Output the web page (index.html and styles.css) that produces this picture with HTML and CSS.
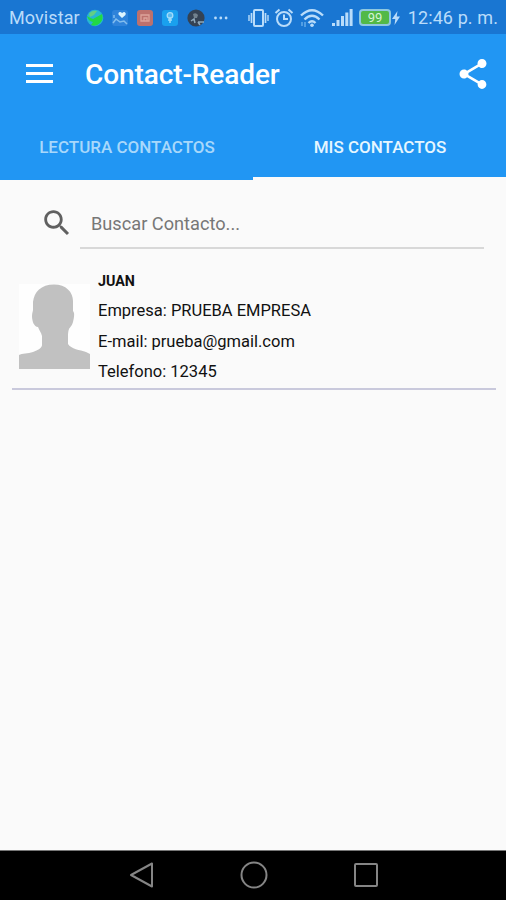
FILE: index.html
```html
<!DOCTYPE html>
<html lang="es">

<head>
    <meta charset="UTF-8">
    <meta name="viewport" content="width=device-width, initial-scale=1.0">
    <title>Contact-Reader</title>
    <link rel="stylesheet" href="styles.css">
</head>

<body>
    <div class="status-bar">
        <span class="carrier">Movistar</span>
        <div class="notifications">
            <svg width="18" height="18" viewBox="0 0 18 18">
                <circle cx="9" cy="9" r="8.3" fill="#27b6d2" />
                <path d="M1 7Q4 9 7 10L16 5Q18 10 14 14Q10 18 5 16L7 13Q2 12 1 7Z" fill="#22d944" />
                <path d="M3 5Q6 1 11 2L8 6L4 8Z" fill="#62cf83" />
            </svg>
            <svg width="18" height="18" viewBox="0 0 18 18">
                <rect x="1" y="1" width="16" height="16" rx="3" fill="#2f83da" />
                <path d="M11 9L7.5 5.5Q7 3 9 3Q10.500 3 11 4.300Q12 3 13.500 3Q15.500 4 14.500 6Z" fill="#def5ff" />
                <path d="M2 14L5 10L9 13L13 12L16 15M3 6V9" fill="none" stroke="#82bded" stroke-width="1.500" />
            </svg>
            <svg width="18" height="18" viewBox="0 0 18 18">
                <rect x="1" y="1" width="16" height="16" rx="3" fill="#bd716d" />
                <path d="M5 6H13V12H5ZM8 12V9H11V12" fill="none" stroke="#dda29a" stroke-width="1.300" />
            </svg>
            <svg width="18" height="18" viewBox="0 0 18 18">
                <rect x="1" y="1" width="16" height="16" rx="3" fill="#1aa0ee" />
                <circle cx="9" cy="6.500" r="2.800" fill="#58baf0" stroke="#a3dcfa" stroke-width="1.300" />
                <path d="M9 8V14M7 11H11" stroke="#a3dcfa" stroke-width="1.500" />
            </svg>
            <svg width="20" height="18" viewBox="0 0 20 18">
                <circle cx="10" cy="9" r="8.600" fill="#344253" />
                <path d="M7 5Q10 3 12 6L11 9L8 9Z" fill="#71818d" />
                <path d="M5 12L8 10L9 14M12 13H18M12 13L14 16" fill="none" stroke="#8fa9bb" stroke-width="1.500" />
            </svg>
            <svg class="more" width="16" height="18" viewBox="0 0 16 18">
                <circle cx="2.500" cy="9" r="1.400" />
                <circle cx="7.800" cy="9" r="1.400" />
                <circle cx="13.100" cy="9" r="1.400" />
            </svg>
        </div>
        <div class="system">
            <svg width="21" height="20" viewBox="0 0 21 20" fill="none" stroke="#b9dcfa">
                <rect x="6" y="2" width="9" height="16" rx="1" stroke-width="2" />
                <path d="M3.500 5V15M17.500 5V15" stroke-width="1.700" />
                <path d="M1 7V13M20 7V13" stroke-width="1.400" />
            </svg>
            <svg class="alarm" width="20" height="20" viewBox="0 0 20 20" fill="none" stroke="#b9dcfa" stroke-width="2">
                <circle cx="10" cy="11" r="7" />
                <path d="M10 6.500V11H14M1.500 5L5.500 1.500M18.500 5L14.500 1.500" />
            </svg>
            <svg class="wifi" width="24" height="20" viewBox="0 0 24 20" fill="none" stroke="#b9dcfa" stroke-width="2.400">
                <path d="M1 7.500Q12 -3 23 7.500M4.500 11.500Q12 4 19.500 11.500M8.500 15Q12 11.500 15.500 15" />
                <circle cx="12" cy="17.300" r="1.800" fill="#b9dcfa" stroke="none" />
                <path d="M2 14V18M5 14V19" stroke="#66ace9" stroke-width="1.500" />
            </svg>
            <svg class="signal" width="22" height="20" viewBox="0 0 22 20" fill="#b9dcfa">
                <rect x="1" y="15" width="3" height="3" />
                <rect x="5.500" y="12" width="3" height="6" />
                <rect x="10" y="8" width="3" height="10" />
                <rect x="14.300" y="4.500" width="3" height="13.500" />
                <rect x="18.600" y="1" width="3" height="17" />
            </svg>
            <div class="battery">99</div>
            <svg width="8" height="16" viewBox="0 0 8 16" fill="#b9dcfa">
                <path d="M5.500 1L0 9H3.300L2.500 15L8 6.500H4.700Z" />
            </svg>
        </div>
        <span class="time">12:46 p. m.</span>
    </div>

    <div class="toolbar">
        <svg class="menu" width="27" height="20" viewBox="0 0 27 20" fill="#fff">
            <rect width="27" height="3" />
            <rect y="8" width="27" height="3" />
            <rect y="16" width="27" height="3" />
        </svg>
        <h1>Contact-Reader</h1>
        <svg class="share" width="36" height="36" viewBox="0 0 24 24" fill="#fff">
            <path d="M18 16.080c-.760 0-1.440.300-1.960.770L8.910 12.700c.050-.230.090-.460.090-.700s-.040-.470-.090-.700l7.050-4.110c.540.500 1.250.810 2.040.810 1.660 0 3-1.340 3-3s-1.340-3-3-3-3 1.340-3 3c0 .240.040.470.090.700L8.040 9.810C7.500 9.310 6.790 9 6 9c-1.660 0-3 1.340-3 3s1.340 3 3 3c.790 0 1.500-.310 2.040-.810l7.120 4.160c-.050.210-.080.430-.080.650 0 1.610 1.310 2.920 2.920 2.920s2.920-1.310 2.920-2.920-1.310-2.920-2.920-2.920z" />
        </svg>
    </div>

    <div class="tabs">
        <div class="tab">LECTURA CONTACTOS</div>
        <div class="tab active">MIS CONTACTOS</div>
    </div>

    <div class="content">
        <div class="search">
            <svg width="34" height="34" viewBox="0 0 24 24" fill="#606060">
                <path d="M15.500 14h-.790l-.280-.270C15.410 12.590 16 11.110 16 9.500 16 5.910 13.090 3 9.500 3S3 5.910 3 9.500 5.910 16 9.500 16c1.610 0 3.090-.590 4.230-1.570l.270.280v.790l5 4.990L20.490 19l-4.990-5zm-6 0C7.010 14 5 11.990 5 9.500S7.010 5 9.500 5 14 7.010 14 9.500 11.990 14 9.500 14z" />
            </svg>
            <div class="search-field">Buscar Contacto...</div>
        </div>

        <div class="contact">
            <svg class="avatar" width="71" height="85" viewBox="0 0 71 85">
                <rect width="71" height="85" fill="#fefefe" />
                <path d="M35 0.500C47 0.500 54 8 54 17V27C56 29 55 34 54 38C53 42 51 43 50 45C49 48 49 50 49 52V60C52 65 61 66 67 68L71 70V85H0V71C3 69 9 70 14 68C19 66 23 64 23 61V52C22 48 20 46 19 43C15 43 13 37 13 32C13 29 14 27 14 26V18C15 8 22 0.500 35 0.500Z" fill="#c1c1c1" />
            </svg>
            <div class="details">
                <p class="name">JUAN</p>
                <p class="company">Empresa: PRUEBA EMPRESA</p>
                <p class="email">E-mail: prueba@gmail.com</p>
                <p class="phone">Telefono: 12345</p>
            </div>
        </div>
    </div>

    <div class="nav-bar">
        <svg width="28" height="28" viewBox="0 0 28 28">
            <path d="M24 2.500V25.500L3 14Z" />
        </svg>
        <svg width="28" height="28" viewBox="0 0 28 28">
            <circle cx="14" cy="14" r="12.500" />
        </svg>
        <svg width="28" height="28" viewBox="0 0 28 28">
            <rect x="3" y="3" width="22" height="22" rx="1" />
        </svg>
    </div>
</body>

</html>
```

FILE: styles.css
```css
* {
    margin: 0;
    padding: 0;
    box-sizing: border-box;
}

body {
    display: flex;
    flex-direction: column;
    height: 900px;
    background-color: #fafafa;
    font-family: Roboto, sans-serif;
    color: #111;
    overflow: hidden;
}

svg {
    display: block;
    flex-shrink: 0;
}

.status-bar {
    display: flex;
    align-items: center;
    height: 34px;
    padding: 1px 8px 0 9px;
    background-color: #1976d2;
    color: #b9dcfa;
    font-size: 18px;
    white-space: nowrap;
}

.carrier {
    width: 77px;
    letter-spacing: 0.1px;
}

.notifications {
    display: flex;
    gap: 7px;
}

.more {
    fill: #b9dcfa;
}

.system {
    display: flex;
    align-items: center;
    margin-left: 19px;
}

.alarm {
    margin-left: 5px;
}

.wifi {
    margin-left: 6px;
}

.signal {
    margin-left: 7px;
}

.battery {
    width: 32px;
    height: 17px;
    margin: 0 1px 0 6px;
    border: 2px solid #8fc8df;
    border-radius: 4px;
    background-color: #52b947;
    color: #d4f4d6;
    font-size: 13px;
    line-height: 13px;
    text-align: center;
}

.time {
    margin-left: auto;
    letter-spacing: 0.1px;
}

.toolbar {
    display: flex;
    align-items: center;
    height: 80px;
    padding: 0 15px 0 26px;
    background-color: #2196f3;
    color: #fff;
}

h1 {
    margin-left: 32px;
    font-size: 28px;
    font-weight: 500;
    letter-spacing: -0.1px;
}

.share {
    margin-left: auto;
}

.tabs {
    display: flex;
    height: 66px;
    background-color: #2196f3;
}

.tab {
    flex: 1;
    height: 66px;
    padding-left: 1px;
    color: #a8d8fb;
    font-size: 17px;
    font-weight: 500;
    line-height: 66px;
    text-align: center;
}

.active {
    border-bottom: 3px solid #fafafa;
    color: #e6f6ff;
}

.content {
    flex: 1;
    padding: 17px 10px 0 12px;
}

.search {
    display: flex;
    align-items: center;
    height: 52px;
    padding: 0 12px 0 28px;
}

.search-field {
    flex: 1;
    height: 52px;
    margin-left: 6px;
    padding-left: 11px;
    border-bottom: 2px solid #d8d8d8;
    color: #777;
    font-size: 18.2px;
    line-height: 53px;
}

.contact {
    display: flex;
    height: 141px;
    padding-left: 7px;
    border-bottom: 2px solid #c9c9dc;
}

.avatar {
    margin-top: 35px;
}

.details {
    margin-left: 8px;
    padding-top: 17px;
    font-size: 16.5px;
    line-height: 30.7px;
    white-space: nowrap;
}

.name {
    font-size: 14.3px;
    font-weight: 700;
    line-height: 30px;
}

.nav-bar {
    display: flex;
    justify-content: center;
    gap: 84px;
    height: 50px;
    padding: 10px 0 0 1px;
    border-top: 1px solid #777;
    background-color: #000;
}

.nav-bar svg {
    fill: none;
    stroke: #858585;
    stroke-width: 2;
    stroke-linejoin: round;
}
```
